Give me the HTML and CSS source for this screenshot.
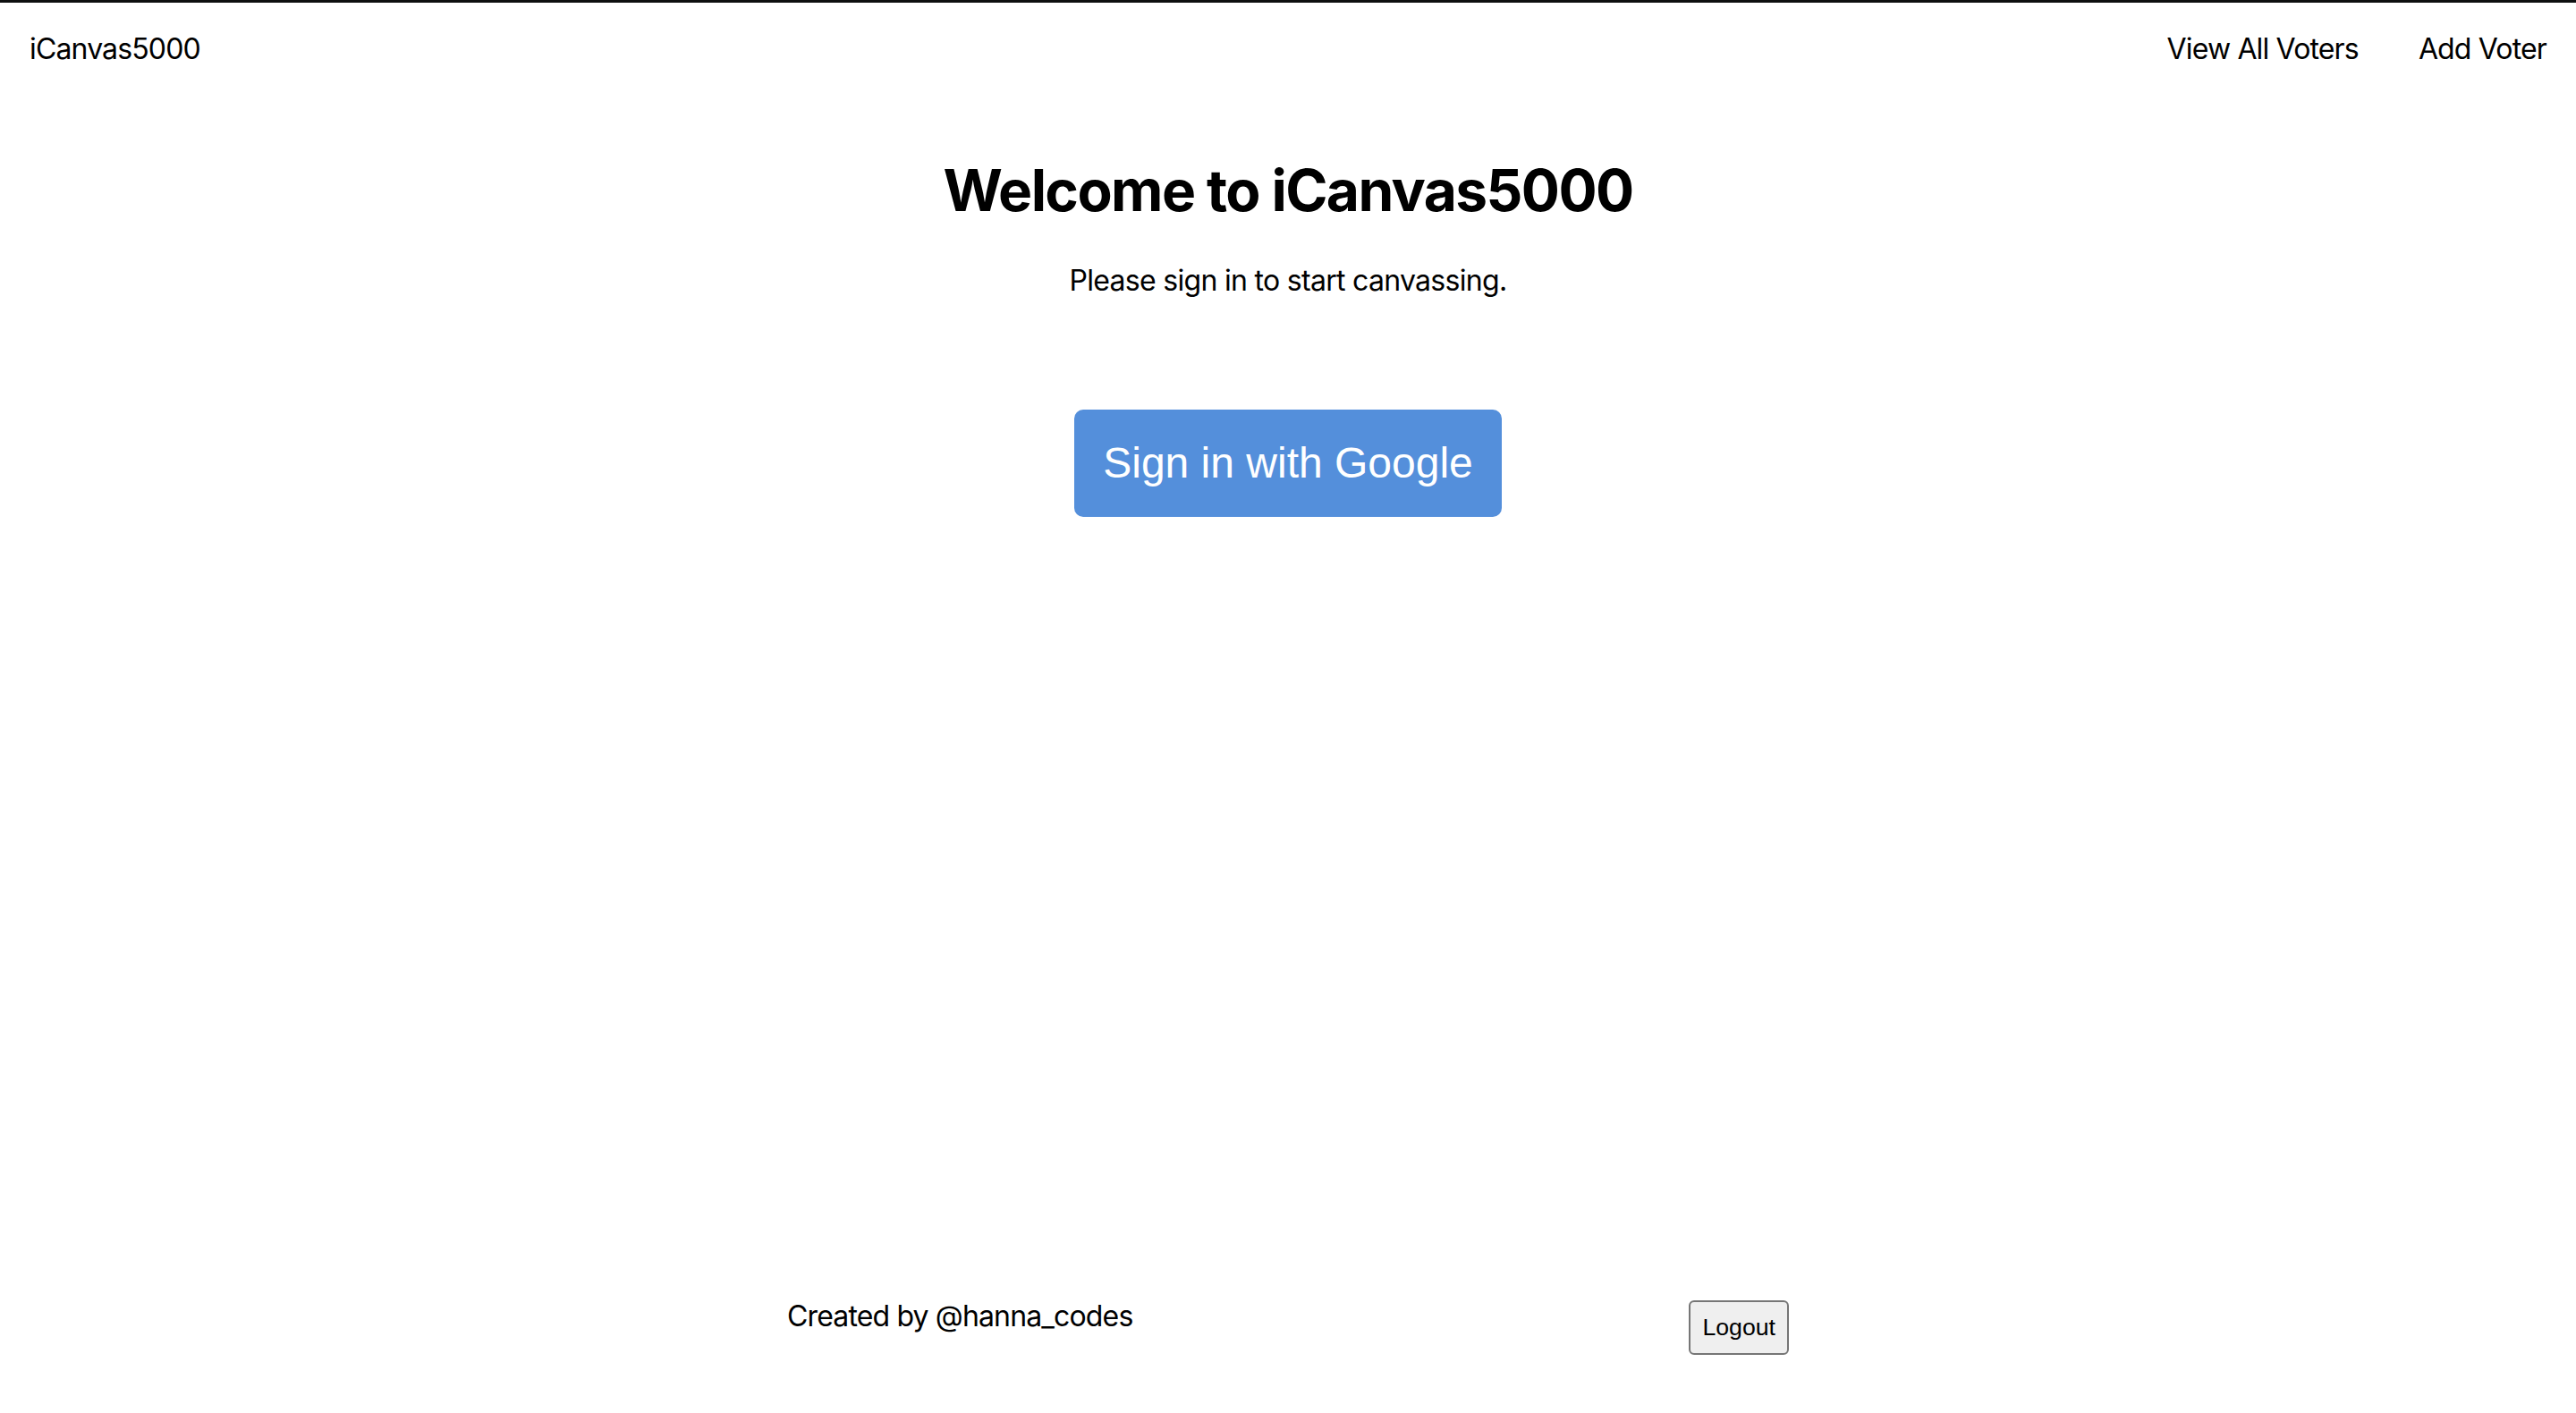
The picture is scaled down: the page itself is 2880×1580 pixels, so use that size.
FILE: index.html
```html
<!DOCTYPE html>
<html lang="en">
<head>
<meta charset="utf-8">
<title>iCanvas5000</title>
<link rel="stylesheet" href="styles.css">
</head>
<body>
<div class="page">
  <div class="topbar"></div>
  <nav class="nav">
    <a class="brand" href="#">iCanvas5000</a>
    <div class="links">
      <a href="#">View All Voters</a>
      <a href="#">Add Voter</a>
    </div>
  </nav>
  <main class="main">
    <h1 class="title">Welcome to iCanvas5000</h1>
    <p class="subtitle">Please sign in to start canvassing.</p>
    <button class="google">Sign in with Google</button>
  </main>
  <footer class="footer">
    <span class="credit">Created by @hanna_codes</span>
    <button class="logout">Logout</button>
  </footer>
</div>
</body>
</html>
```
FILE: styles.css
```css
html, body {
  margin: 0;
  padding: 0;
  background: #fff;
}
body {
  font-family: Inter, "Liberation Sans", sans-serif;
  color: #000;
}
.page {
  min-height: 100vh;
  display: flex;
  flex-direction: column;
}
.topbar {
  height: 3px;
  background: #0e0f10;
}
.nav {
  display: flex;
  justify-content: space-between;
  align-items: flex-start;
  padding: 32px 33px 0;
  font-size: 32px;
  line-height: 39px;
  letter-spacing: -0.85px;
}
.nav a {
  color: #000;
  text-decoration: none;
}
.links {
  display: flex;
  gap: 67px;
}
.main {
  display: flex;
  flex-direction: column;
  align-items: center;
}
.title {
  margin: 100px 0 0;
  font-size: 64px;
  line-height: 77px;
  font-weight: 700;
  letter-spacing: -1.6px;
}
.subtitle {
  margin: 43px 0 0;
  font-size: 32px;
  line-height: 39px;
  letter-spacing: -0.7px;
}
.google {
  margin-top: 125px;
  padding: 32px 32px;
  font-family: "Liberation Sans", Arial, sans-serif;
  font-size: 48px;
  line-height: 56px;
  color: #fff;
  background: #548fdb;
  border: none;
  border-radius: 10px;
  cursor: pointer;
}
.footer {
  margin-top: auto;
  display: flex;
  justify-content: center;
  align-items: flex-start;
  gap: 622px;
  padding-bottom: 65px;
}
.credit {
  font-size: 32px;
  line-height: 39px;
  letter-spacing: -0.85px;
}
.logout {
  margin-top: 2px;
  padding: 13px 13px;
  font-family: "Liberation Sans", Arial, sans-serif;
  font-size: 26.67px;
  line-height: 31px;
  color: #000;
  background: #efefef;
  border: 2px solid #767676;
  border-radius: 6px;
}
```
